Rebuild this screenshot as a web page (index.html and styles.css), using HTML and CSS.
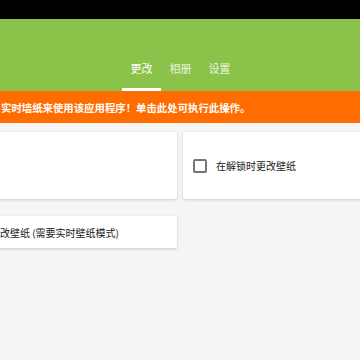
FILE: index.html
```html
<!DOCTYPE html>
<html lang="zh-CN">
<head>
    <meta charset="UTF-8">
    <meta name="viewport" content="width=device-width, initial-scale=1.0">
    <title>更改壁纸</title>
    <link rel="stylesheet" href="styles.css">
</head>
<body>
    <div class="status-bar"></div>

    <header class="app-bar">
        <nav class="tabs">
            <a class="tab active">更改</a>
            <a class="tab">相册</a>
            <a class="tab">设置</a>
        </nav>
    </header>

    <div class="banner">
        <span class="banner-text">实时墙纸来使用该应用程序！单击此处可执行此操作。</span>
    </div>

    <main class="content">
        <div class="grid">
            <div class="card tall"></div>
            <div class="card tall">
                <label class="check">
                    <span class="box"></span>
                    <span>在解锁时更改壁纸</span>
                </label>
            </div>
            <div class="card short">
                <span class="card-text">改壁纸 (需要实时壁纸模式)</span>
            </div>
        </div>
    </main>
</body>
</html>
```

FILE: styles.css
```css
html, body {
    margin: 0;
    padding: 0;
}
body {
    width: 360px;
    height: 360px;
    overflow: hidden;
    background-color: #f5f5f5;
    font-family: "Noto Sans CJK SC", "Noto Sans", sans-serif;
    color: #212121;
}
.status-bar {
    height: 19px;
    background-color: #000;
}
.app-bar {
    height: 72px;
    background-color: #8bc34a;
    display: flex;
    align-items: flex-end;
}
.tabs {
    display: flex;
    margin-left: 122px;
}
.tab {
    width: 39px;
    height: 36px;
    box-sizing: border-box;
    display: flex;
    align-items: center;
    justify-content: center;
    padding-bottom: 7px;
    font-size: 11px;
    color: rgba(255, 255, 255, 0.85);
    border-bottom: 3px solid transparent;
}
.tab.active {
    color: #fff;
    border-bottom-color: #fff;
}
.banner {
    height: 32px;
    background-color: #ff6d00;
    display: flex;
    align-items: center;
    padding-left: 1px;
}
.banner-text {
    white-space: nowrap;
    font-size: 10.4px;
    font-weight: bold;
    color: #fff;
}
.content {
    padding-top: 9px;
}
.grid {
    display: grid;
    grid-template-columns: 198px 198px;
    column-gap: 6px;
    row-gap: 17px;
    margin-left: -21px;
}
.card {
    background-color: #fff;
    border-radius: 2px;
    box-shadow: 0 1px 3px rgba(0, 0, 0, 0.18);
    display: flex;
    align-items: center;
    padding: 0 10px;
}
.card.tall {
    height: 67px;
}
.card.short {
    height: 32px;
    padding-left: 21px;
}
.check {
    display: flex;
    align-items: center;
    gap: 9px;
    font-size: 10px;
}
.box {
    width: 10px;
    height: 10px;
    border: 2px solid #757575;
    border-radius: 2px;
}
.card-text {
    font-size: 10px;
    white-space: nowrap;
}
```
